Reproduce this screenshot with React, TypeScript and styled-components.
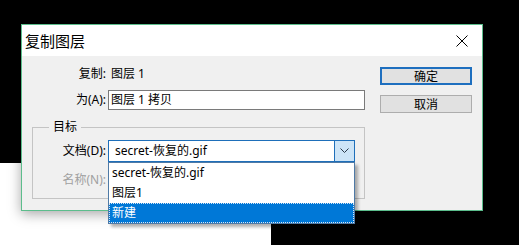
import React from "react";
import styled, { createGlobalStyle } from "styled-components";

const GlobalStyle = createGlobalStyle`
  html, body {
    margin: 0;
    padding: 0;
    background: #000;
  }
  body {
    font-family: "Noto Sans", "Noto Sans CJK SC", sans-serif;
    color: #000;
  }
`;

const Desktop = styled.div`
  position: relative;
  width: 519px;
  height: 245px;
  background: #000;
  overflow: hidden;
`;

const WhitePatch = styled.div`
  position: absolute;
  left: 0;
  top: 163px;
  width: 271px;
  height: 82px;
  background: #fff;
`;

const Window = styled.div`
  position: absolute;
  left: 21px;
  top: 24px;
  width: 462px;
  height: 187px;
  box-sizing: border-box;
  border: 1px solid #5cbd8c;
  background: #f0f0f0;
  display: flex;
  flex-direction: column;
  box-shadow: 0 3px 12px rgba(0, 0, 0, 0.35);
`;

const TitleBar = styled.div`
  height: 31px;
  flex: none;
  background: #fff;
  display: flex;
  align-items: center;
  justify-content: space-between;
  padding: 0 14px 0 3px;
`;

const Title = styled.span`
  font-family: "Noto Sans CJK SC", sans-serif;
  font-size: 15px;
  line-height: 20px;
`;

const Body = styled.div`
  flex: 1;
  display: flex;
  padding: 8px 10px 0 10px;
`;

const LeftCol = styled.div`
  width: 333px;
  display: flex;
  flex-direction: column;
`;

const FormGrid = styled.div<{ $label: number; $field: number; $rowGap: number }>`
  display: grid;
  grid-template-columns: ${({ $label }) => $label}px ${({ $field }) => $field}px;
  column-gap: 2px;
  row-gap: ${({ $rowGap }) => $rowGap}px;
  align-items: center;
`;

const Label = styled.span<{ $disabled?: boolean }>`
  font-size: 12px;
  line-height: 20px;
  text-align: right;
  white-space: nowrap;
  color: ${({ $disabled }) => ($disabled ? "#a0a0a0" : "#000")};
`;

const Value = styled.span`
  font-size: 12px;
  line-height: 20px;
  padding-left: 3px;
`;

const TextInput = styled.div`
  height: 20px;
  box-sizing: border-box;
  border: 1px solid #7a7a7a;
  background: #fff;
  padding: 0 2px;
  font-size: 12px;
  line-height: 18px;
  white-space: nowrap;
`;

const GroupBox = styled.fieldset`
  margin: 9px 0 0 0;
  padding: 5px 9px 8px 0;
  border: 1px solid #c4c4c4;
  min-width: 0;
`;

const Legend = styled.legend`
  margin-left: 16px;
  padding: 0 4px;
  font-size: 12px;
  line-height: 16px;
`;

const Combo = styled.div`
  position: relative;
  z-index: 2;
  height: 22px;
  box-sizing: border-box;
  border: 1px solid #1e6fba;
  background: #fff;
  display: flex;
`;

const ComboText = styled.span`
  flex: 1;
  padding-left: 6px;
  font-size: 12px;
  line-height: 20px;
  white-space: nowrap;
`;

const ComboArrow = styled.span`
  width: 20px;
  box-sizing: border-box;
  background: #cce4f7;
  border-left: 1px solid #1e6fba;
  display: flex;
  align-items: center;
  justify-content: center;
`;

const DropList = styled.ul`
  position: absolute;
  left: -1px;
  top: calc(100% + 1px);
  width: 247px;
  box-sizing: border-box;
  margin: 0;
  padding: 0;
  list-style: none;
  background: #fff;
  border: 1px solid #4f7aa6;
  box-shadow: 3px 3px 3px rgba(0, 0, 0, 0.3);
`;

const DropItem = styled.li<{ $selected?: boolean }>`
  height: 20px;
  padding-left: 3px;
  font-size: 12px;
  line-height: 20px;
  white-space: nowrap;
  background: ${({ $selected }) => ($selected ? "#0078d7" : "#fff")};
  color: ${({ $selected }) => ($selected ? "#fff" : "#000")};
  outline: ${({ $selected }) => ($selected ? "1px dotted #d8e6f4" : "none")};
  outline-offset: -1px;
`;

const DisabledField = styled.div`
  height: 20px;
  box-sizing: border-box;
  border: 1px solid #cccccc;
  background: #f0f0f0;
`;

const ButtonCol = styled.div`
  margin-left: 15px;
  padding-top: 3px;
  display: flex;
  flex-direction: column;
  gap: 10px;
`;

const Button = styled.button<{ $default?: boolean }>`
  width: 92px;
  height: 18px;
  box-sizing: border-box;
  margin: 0;
  padding: 0;
  background: #e1e1e1;
  border: ${({ $default }) => ($default ? "2px solid #1e6fbf" : "1px solid #adadad")};
  font-family: "Noto Sans CJK SC", sans-serif;
  font-size: 12px;
  line-height: 14px;
  color: #000;
`;

const CloseIcon = () => (
  <svg width="12" height="12" viewBox="0 0 12 12">
    <path d="M0.5 0.5 L11.5 11.5 M11.5 0.5 L0.5 11.5" stroke="#000" strokeWidth="1" fill="none" />
  </svg>
);

const Chevron = () => (
  <svg width="9" height="6" viewBox="0 0 9 6">
    <path d="M0.5 0.5 L4.5 4.5 L8.5 0.5" stroke="#2b3a4a" strokeWidth="1" fill="none" />
  </svg>
);

const docs = ["secret-恢复的.gif", "图层1", "新建"];

export default function App() {
  return (
    <Desktop>
      <GlobalStyle />
      <WhitePatch />
      <Window>
        <TitleBar>
          <Title>复制图层</Title>
          <CloseIcon />
        </TitleBar>
        <Body>
          <LeftCol>
            <FormGrid $label={74} $field={257} $rowGap={6}>
              <Label>复制:</Label>
              <Value>图层 1</Value>
              <Label>为(A):</Label>
              <TextInput>图层 1 拷贝</TextInput>
            </FormGrid>
            <GroupBox>
              <Legend>目标</Legend>
              <FormGrid $label={73} $field={247} $rowGap={8}>
                <Label>文档(D):</Label>
                <Combo>
                  <ComboText>secret-恢复的.gif</ComboText>
                  <ComboArrow>
                    <Chevron />
                  </ComboArrow>
                  <DropList>
                    {docs.map((d, i) => (
                      <DropItem key={d} $selected={i === docs.length - 1}>
                        {d}
                      </DropItem>
                    ))}
                  </DropList>
                </Combo>
                <Label $disabled>名称(N):</Label>
                <DisabledField />
              </FormGrid>
            </GroupBox>
          </LeftCol>
          <ButtonCol>
            <Button $default>确定</Button>
            <Button>取消</Button>
          </ButtonCol>
        </Body>
      </Window>
    </Desktop>
  );
}
